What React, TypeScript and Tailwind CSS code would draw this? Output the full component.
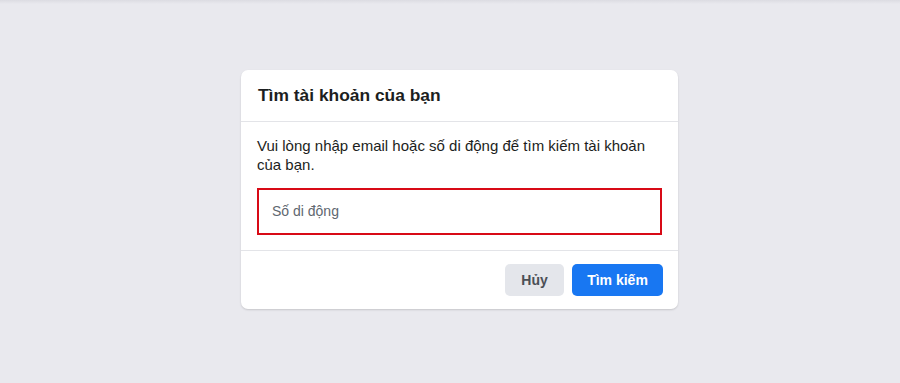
export default function App() {
  return (
    <div
      className="min-h-[383px] w-full bg-[#e9e9ee] pt-[70px]"
      style={{ fontFamily: '"Liberation Sans", Arial, sans-serif' }}
    >
      <div className="fixed left-0 top-0 h-[4px] w-full bg-gradient-to-b from-[#dcdce2] to-[#e9e9ee]" />
      <div className="ml-[241px] w-[437px] rounded-[7px] bg-white shadow-[0_1px_2px_rgba(0,0,0,0.15)]">
        <div className="flex h-[52px] items-center border-b border-[#e3e4e8] px-[17px]">
          <h2 className="text-[17.4px] font-bold text-[#1c1e21]">Tìm tài khoản của bạn</h2>
        </div>
        <div className="px-4 pt-[14px]">
          <p className="text-[15px] leading-[19px] text-[#1c1e21]">
            Vui lòng nhập email hoặc số di động để tìm kiếm tài khoản của bạn.
          </p>
          <div className="mt-[14px] flex h-[47px] items-center border-[2.5px] border-[#d80a16] px-[13px]">
            <input
              className="w-full bg-transparent text-[14px] text-[#1c1e21] outline-none placeholder:text-[#606770]"
              placeholder="Số di động"
            />
          </div>
        </div>
        <div className="mt-[15px] flex justify-end gap-2 border-t border-[#e3e4e8] px-[15px] pb-[13px] pt-[13px]">
          <button className="h-[32px] w-[59px] rounded-[5px] bg-[#e4e6eb] text-[14px] font-bold text-[#4b4f56]">
            Hủy
          </button>
          <button className="h-[32px] w-[91px] rounded-[5px] bg-[#1877f2] text-[14px] font-bold text-white">
            Tìm kiếm
          </button>
        </div>
      </div>
    </div>
  );
}
